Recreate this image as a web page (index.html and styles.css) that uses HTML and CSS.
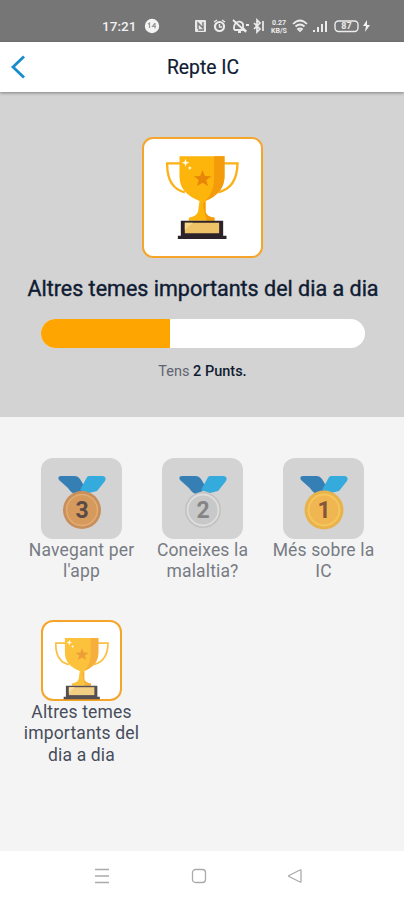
FILE: index.html
```
<!DOCTYPE html>
<html lang="ca">
<head>
<meta charset="utf-8">
<title>Repte IC</title>
<link rel="stylesheet" href="styles.css">
</head>
<body>
<svg class="defs" width="0" height="0">
  <symbol id="trophy" viewBox="95 78 218 249">
    <path d="M140 100H98Q97 174 151 187M265 100H309Q308 174 251 187" fill="none" stroke="#fbb116" stroke-width="7"/>
    <path d="M135 79H270V142Q268 190 213 213V245Q216 260 240 263V272H163V263Q189 259 191 243L195 213Q136 190 135 142Z" fill="#fdb40b"/>
    <path d="M239 79H270V142Q268 190 213 213Q240 184 239 142ZM205 222L213 213V245Q216 260 240 263V272H217Q208 248 205 222Z" fill="#f49b0c"/>
    <path d="M204 121L211 138L231 139L215 150L221 168L204 158L187 168L193 150L178 139L197 138Z" fill="#e88608"/>
    <path d="M153 86L156 95L165 98L156 101L153 110L150 101L141 98L150 95ZM166 108L168 112L172 114L168 116L166 120L164 116L160 114L164 112Z" fill="#fffbe6"/>
    <path d="M139 272H266V317H276V327H130V317H139Z" fill="#2b2329"/>
    <path d="M151 278H254V310H151Z" fill="#efc267"/>
    <path d="M151 278H175L151 300Z" fill="#f7d78b"/>
  </symbol>
  <symbol id="ribbon" viewBox="0 0 48 54">
    <path d="M3 0H17Q20 0 22 3L28 13L17 18Q13 17 10 12L1 4Q-1 0 3 0Z" fill="#367fb5"/>
    <path d="M31 0H45Q49 1 47 5L39 15L31 17L22 14L28 3Q29 0 31 0Z" fill="#35aadc"/>
  </symbol>
</svg>
<div class="status">
  <span class="time">17:21</span>
  <svg class="sicons" width="230" height="18" viewBox="0 0 230 18" fill="none" stroke="#ececec" stroke-width="1.4">
    <circle cx="8" cy="9" r="7.2" fill="#f4f4f4" stroke="none"/>
    <path d="M4 7L5.5 6V11M11 6L8.500 9.500H12M11 6V11.500" stroke="#999" stroke-width="1.2"/>
    <rect x="51" y="3" width="11" height="12" rx="1" fill="#e8e8e8" stroke="none"/>
    <path d="M54 12V6L59 11V5M54 13H60" stroke="#787878"/>
    <circle cx="75.500" cy="9.500" r="4.500" stroke-width="2.200"/><path d="M70 5L73 3M78 3L81 5M75.500 7V10H78"/>
    <path d="M90 12V10C91 4 97 3 99 7V11L101 13H91ZM89 3L102 15M94 15H97M102 8L105 8" stroke-width="1.800"/>
    <path d="M110 6L116 12L113 15V3L116 6L110 12M119 4V14" stroke-width="1.700"/>
    <text x="135" y="7.500">0.27</text><text x="135" y="16">KB/S</text>
    <path d="M149 7Q156 0 163 7M151.500 9.500Q156 5.500 160.500 9.500M154 12Q156 10.500 158 12L156 14Z" stroke-width="1.700"/>
    <path d="M170 13V15M174 10V15M178 7V15M182 4V15" stroke-width="2"/>
    <rect x="191" y="4" width="23" height="10.500" rx="3.500"/>
    <text class="charge" x="202.500" y="12.300">87</text>
    <path d="M223 3L219 9H222L221 15L226 8H223Z" fill="#f2f2f2" stroke="none"/>
  </svg>
</div>
<header class="bar">
  <svg width="16" height="26" viewBox="0 0 16 26"><path d="M14 2.500L3 13L14 23.500" fill="none" stroke="#198ccb" stroke-width="2.800"/></svg>
  <h1>Repte IC</h1>
</header>
<section class="hero">
  <div class="prize"><svg width="73" height="83"><use href="#trophy"/></svg></div>
  <h2>Altres temes importants del dia a dia</h2>
  <div class="progress"><div class="fill" style="width:40%"></div></div>
  <p>Tens <b>2 Punts.</b></p>
</section>
<main class="grid">
  <div class="item">
    <div class="tile"><svg width="48" height="54" viewBox="0 0 48 54"><use href="#ribbon"/><circle cx="24" cy="34" r="19" fill="#c88f5b"/><circle cx="24" cy="34" r="15.500" fill="#d69a5c" stroke="#e2ad74" stroke-width="1.500"/><text x="24" y="42" fill="#594a48">3</text></svg></div>
    <span>Navegant per l'app</span>
  </div>
  <div class="item">
    <div class="tile"><svg width="48" height="54" viewBox="0 0 48 54"><use href="#ribbon"/><circle cx="24" cy="34" r="18" fill="#c2c2c2"/><circle cx="24" cy="34" r="15.500" fill="#c8c8c8" stroke="#dedede" stroke-width="1.800"/><text x="24" y="42" fill="#858585">2</text></svg></div>
    <span>Coneixes la malaltia?</span>
  </div>
  <div class="item">
    <div class="tile"><svg width="48" height="54" viewBox="0 0 48 54"><use href="#ribbon"/><circle cx="24" cy="34" r="19.500" fill="#e8b34c"/><circle cx="24" cy="34" r="15.500" fill="#f0b652" stroke="#f5c75c" stroke-width="1.800"/><text x="24" y="42" fill="#84573d">1</text></svg></div>
    <span>Més sobre la IC</span>
  </div>
  <div class="item current">
    <div class="tile"><svg width="54" height="63"><use href="#trophy"/></svg></div>
    <span>Altres temes importants del dia a dia</span>
  </div>
</main>
<nav class="nav">
  <svg width="16" height="16" viewBox="0 0 16 16"><path d="M1 1.500H15M1 8H15M1 14.500H15"/></svg>
  <svg width="16" height="16" viewBox="0 0 16 16"><rect x="1.500" y="1.500" width="13" height="13" rx="3"/></svg>
  <svg width="16" height="16" viewBox="0 0 16 16"><path d="M14 2.500V13.500Q14 14.500 13 14L2 8.500Q1 8 2 7.500L13 2Q14 1.500 14 2.500Z"/></svg>
</nav>
</body>
</html>
```
FILE: styles.css
```
* { box-sizing: border-box; }
body { margin: 0; height: 900px; display: flex; flex-direction: column; background: #f4f4f4; font-family: Roboto, sans-serif; color: #101c33; overflow: hidden; }
.defs { position: absolute; }
.status { height: 42px; flex: none; background: #767676; display: flex; align-items: center; padding: 10px 0 0 102px; color: #f0f0f0; }
.time { width: 42px; font-size: 13.6px; font-weight: 500; }
.sicons text { font-size: 7px; font-weight: 700; fill: #ececec; stroke: none; text-anchor: middle; }
.sicons .charge { font-size: 9px; }
.bar { height: 50px; flex: none; background: #fff; display: flex; align-items: center; padding: 0 10px; position: relative; z-index: 1; box-shadow: 0 1px 3px rgba(0, 0, 0, 0.4); }
.bar h1 { flex: 1; margin: 0 14px 0 0; text-align: center; font-size: 19.3px; font-weight: 400; -webkit-text-stroke: 0.2px; }
.hero { height: 325px; flex: none; background: #d3d3d3; display: flex; flex-direction: column; align-items: center; padding-top: 45px; }
.prize { width: 121px; height: 121px; flex: none; background: #fff; border: 2px solid #f5a62a; border-radius: 11px; display: flex; justify-content: center; padding-top: 17px; }
.hero h2 { margin: 17px 0 0 2px; font-size: 21.5px; line-height: 28px; font-weight: 400; white-space: nowrap; -webkit-text-stroke: 0.4px; }
.progress { width: 324px; height: 29px; margin: 16px 0 0 1px; border-radius: 15px; background: #fff; overflow: hidden; }
.fill { height: 100%; background: #ffa502; }
.hero p { margin: 14px 0 0 1px; font-size: 14.5px; line-height: 20px; color: #5f6470; }
.hero b { font-weight: 500; color: #101c33; }
.grid { flex: 1; padding: 41px 20px 0 21px; display: grid; grid-template-columns: repeat(3, 121px); grid-auto-rows: 162px; }
.item { display: flex; flex-direction: column; align-items: center; text-align: center; font-size: 17.5px; line-height: 21.4px; letter-spacing: 0.15px; color: #777b83; }
.item span { margin-top: 1px; }
.tile { width: 81px; height: 81px; flex: none; background: #d3d3d3; border-radius: 12px; display: flex; justify-content: center; padding-top: 18px; }
.tile text { font-size: 23px; font-weight: 700; text-anchor: middle; letter-spacing: 0; }
.current { color: #474d5c; }
.current .tile { background: #fff; border: 2px solid #f5a62a; padding-top: 15px; }
.current svg { opacity: 0.8; }
.nav { height: 49px; flex: none; background: #fff; display: flex; justify-content: space-between; align-items: center; padding: 0 101px 0 94px; fill: none; stroke: #aaa; stroke-width: 1.3; }
```
